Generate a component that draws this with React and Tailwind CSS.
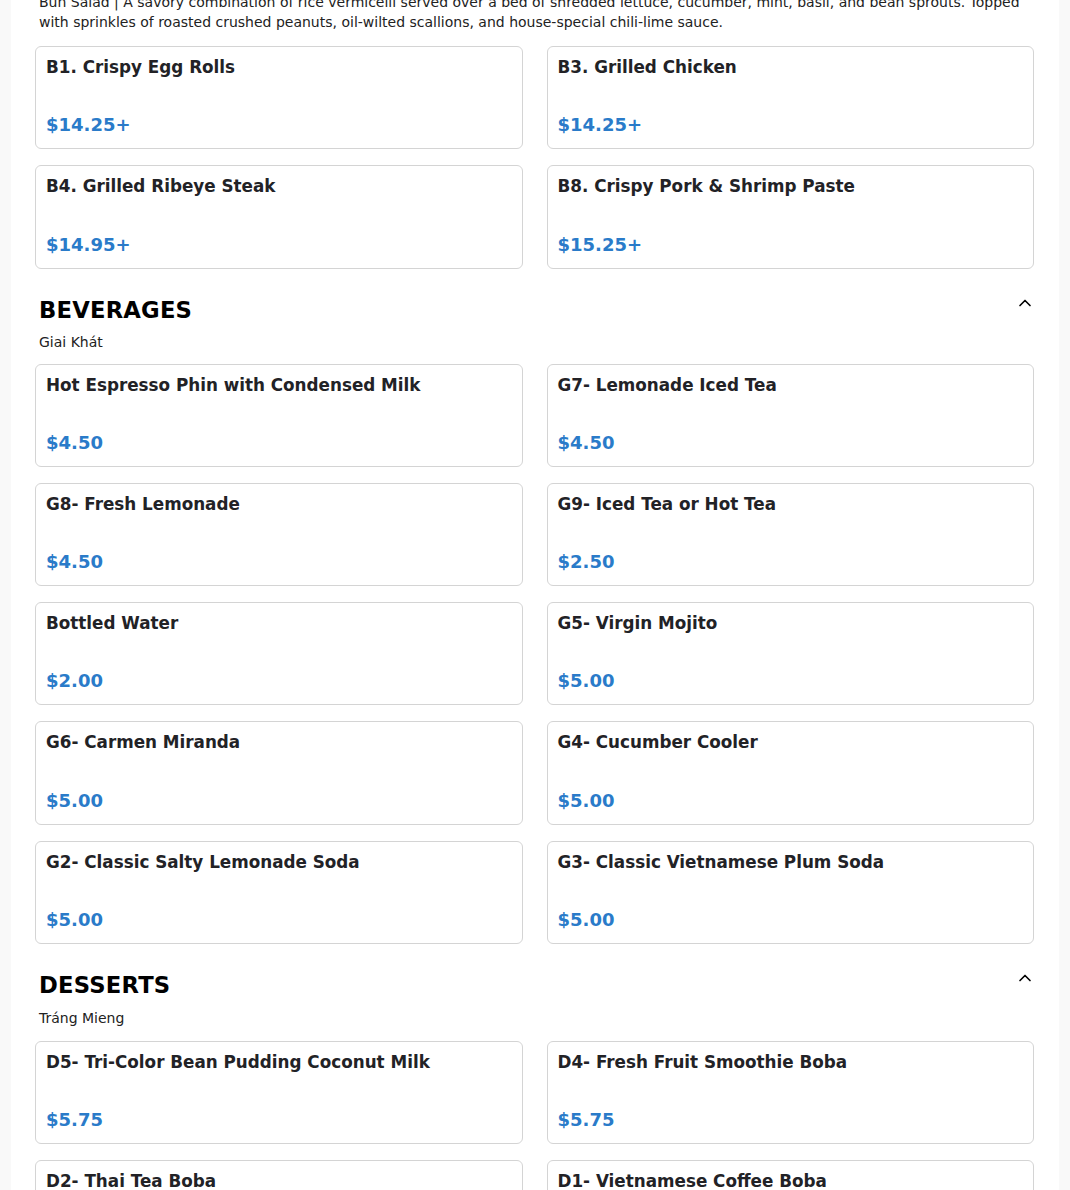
import React from "react";
import { ChevronUp } from "lucide-react";

const bun = [
  ["B1. Crispy Egg Rolls", "$14.25+"],
  ["B3. Grilled Chicken", "$14.25+"],
  ["B4. Grilled Ribeye Steak", "$14.95+"],
  ["B8. Crispy Pork & Shrimp Paste", "$15.25+"],
];

const beverages = [
  ["Hot Espresso Phin with Condensed Milk", "$4.50"],
  ["G7- Lemonade Iced Tea", "$4.50"],
  ["G8- Fresh Lemonade", "$4.50"],
  ["G9- Iced Tea or Hot Tea", "$2.50"],
  ["Bottled Water", "$2.00"],
  ["G5- Virgin Mojito", "$5.00"],
  ["G6- Carmen Miranda", "$5.00"],
  ["G4- Cucumber Cooler", "$5.00"],
  ["G2- Classic Salty Lemonade Soda", "$5.00"],
  ["G3- Classic Vietnamese Plum Soda", "$5.00"],
];

const desserts = [
  ["D5- Tri-Color Bean Pudding Coconut Milk", "$5.75"],
  ["D4- Fresh Fruit Smoothie Boba", "$5.75"],
  ["D2- Thai Tea Boba", "$5.75"],
  ["D1- Vietnamese Coffee Boba", "$5.75"],
];

function Card({ name, price }) {
  return (
    <div className="h-[103.25px] border border-[#d4d4d4] rounded-md bg-white px-[10px] pt-[9px] pb-[11px] flex flex-col justify-between">
      <div className="text-[16.8px] leading-[22px] font-bold text-[#222226]">{name}</div>
      <div className="text-[18px] leading-[24px] font-bold text-[#2a7bc9]">{price}</div>
    </div>
  );
}

function Grid({ items }) {
  return (
    <div className="grid grid-cols-2 gap-x-6 gap-y-4">
      {items.map(([n, p]) => (
        <Card key={n} name={n} price={p} />
      ))}
    </div>
  );
}

function Section({ title, subtitle, items, subClass, gridClass }) {
  return (
    <div className="mt-[27px]">
      <div className="flex justify-between items-start pl-1">
        <h2 className="text-[22.7px] leading-[28px] font-bold text-black tracking-[0.2px]">{title}</h2>
        <ChevronUp size={20} strokeWidth={2} className="text-black -mt-[3px] -mr-[1px]" />
      </div>
      <div className={"pl-1 text-[14px] leading-[20px] text-[#222] " + subClass}>{subtitle}</div>
      <div className={gridClass}>
        <Grid items={items} />
      </div>
    </div>
  );
}

export default function App() {
  return (
    <div className="min-h-[1190px] bg-[#f9f9f9] font-['DejaVu_Sans',sans-serif] overflow-hidden">
      <div className="mx-[11px] bg-white pl-6 pr-[25px] pb-10 min-h-[1190px]">
        <div className="-mt-[8px] pl-1 text-[14px] leading-[20px] text-[#222]">
          Bun Salad | A savory combination of rice vermicelli served over a bed of shredded lettuce, cucumber, mint, basil, and bean sprouts. Topped with sprinkles of roasted crushed peanuts, oil-wilted scallions, and house-special chili-lime sauce.
        </div>
        <div className="mt-[14px]">
          <Grid items={bun} />
        </div>
        <Section title="BEVERAGES" subtitle="Giai Khát" items={beverages} subClass="mt-2" gridClass="mt-[12px]" />
        <Section title="DESSERTS" subtitle="Tráng Mieng" items={desserts} subClass="mt-[9px]" gridClass="mt-[13px]" />
      </div>
    </div>
  );
}
